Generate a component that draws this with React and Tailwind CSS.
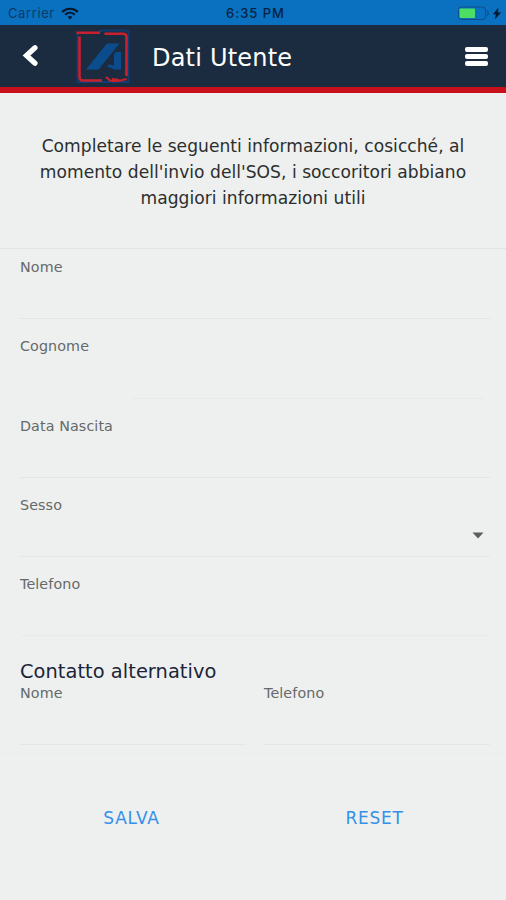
import clsx from "clsx";

function StatusBar() {
  return (
    <div className="h-[25px] bg-[#0a70c0] flex items-center justify-between pl-2 pr-1 font-['Inter','Liberation_Sans',sans-serif] text-[13px] leading-none">
      <div className="flex items-center gap-[6px] flex-1 pt-[2px]">
        <span className="text-[#0b3c69] tracking-[0.6px]">Carrier</span>
        <svg width="18" height="13" viewBox="0 0 18 13" fill="none" className="-mt-px">
          <path d="M1.2 4.9C5.6 0.7 12.4 0.7 16.8 4.9" stroke="#06182c" strokeWidth="2.2" />
          <path d="M4.2 7.8C7 5.2 11 5.2 13.8 7.8" stroke="#06182c" strokeWidth="2" />
          <path d="M6.6 10L9 12.5L11.4 10C10 8.8 8 8.8 6.6 10Z" fill="#06182c" />
        </svg>
      </div>
      <span className="text-[#06233f] font-medium tracking-[1px] pt-[2px] pl-px">
        6:35 PM
      </span>
      <div className="flex-1 flex justify-end">
        <svg width="44" height="15" viewBox="0 0 44 15" fill="none" className="mt-px">
          <rect x="0.5" y="1" width="27" height="12.5" rx="3" stroke="#0c4f8c" />
          <rect x="1.5" y="2.5" width="15.5" height="9.5" rx="1" fill="#4cdf64" />
          <path d="M28.8 4.5C30.8 5.5 30.8 9 28.8 10" stroke="#0c4f8c" strokeWidth="1.2" />
          <path d="M40 2.5L35.5 8H38.2L37.4 12.5L42.5 6.8H39.4Z" fill="#06182c" stroke="#06182c" strokeWidth="0.6" />
        </svg>
      </div>
    </div>
  );
}

function Logo() {
  return (
    <svg width="54" height="56" viewBox="0 0 54 56" fill="none">
      <path d="M1.5 6V54H52.5V5Q52.5 2.5 49 2.5H27L24 3L22 6" stroke="#103c70" strokeWidth="2" />
      <path
        d="M0.5 4.8H24M3.5 8.5V49Q3.5 52.5 7 52.5H26M28.5 5.7H47Q50.5 5.7 50.5 9V48"
        stroke="#c9202f"
        strokeWidth="2.6"
      />
      <path
        d="M30 49L34 52.5Q42 54 50.5 51M36 51L43 52"
        stroke="#c9202f"
        strokeWidth="2.2"
      />
      <path d="M10 41.5L30.5 16Q31 15.5 32 15.5H43.5L22.5 41.5Z" fill="#0b4c8c" />
      <path d="M38 26L40 24H45V41.5H39L31 38.5L33 36.5L38 37.5Z" fill="#0b4c8c" />
    </svg>
  );
}

function Header() {
  return (
    <header className="h-[68px] bg-[#1c2c40] border-b-[6px] border-[#c80f1c] flex items-center">
      <button aria-label="Indietro" className="ml-[22px] mr-[37px] -mt-[2px]">
        <svg width="17" height="23" viewBox="0 0 17 23" fill="none">
          <path
            d="M13 3.8L4.5 11.5L13 19.2"
            stroke="#fff"
            strokeWidth="5.2"
            strokeLinecap="round"
          />
        </svg>
      </button>
      <Logo />
      <h1 className="ml-[22px] mt-[3px] text-[24px] leading-none tracking-[0.2px] text-white flex-1">
        Dati Utente
      </h1>
      <button aria-label="Menu" className="mr-[18px] mt-px flex flex-col gap-[2px]">
        <span className="block w-[23px] h-[5px] rounded-[2px] bg-white" />
        <span className="block w-[23px] h-[5px] rounded-[2px] bg-white" />
        <span className="block w-[23px] h-[5px] rounded-[2px] bg-white" />
      </button>
    </header>
  );
}

function Field({ label, select = false, className, lineClassName = "border-[#e3e6e6]" }) {
  return (
    <div className={clsx("flex flex-col", className)}>
      <label className="text-[14.3px] leading-[18px] tracking-[0.1px] text-[#666969]">
        {label}
      </label>
      <div
        className={clsx("flex-1 border-b flex items-start justify-end", lineClassName)}
      >
        {select && (
          <svg width="12" height="7" viewBox="0 0 12 7" className="mt-[18px] mr-[6px]">
            <path d="M0.5 0.5H11.5L6 6.5Z" fill="#5c5f5f" />
          </svg>
        )}
      </div>
    </div>
  );
}

export default function App() {
  return (
    <div className="w-[506px] h-[900px] bg-[#edf0ef] overflow-hidden font-['DejaVu_Sans',sans-serif]">
      <StatusBar />
      <Header />

      <p className="h-[156px] pt-[40px] border-b border-[#e2e5e5] text-center text-[17.1px] leading-[26px] tracking-[0.03px] text-[#2c2e2e]">
        Completare le seguenti informazioni, cosicché, al
        <br />
        momento dell'invio dell'SOS, i soccoritori abbiano
        <br />
        maggiori informazioni utili
      </p>

      <main className="pl-5 pr-4 pt-[9px]">
        <Field label="Nome" className="h-[61px]" />
        <div className="h-[80px] pt-[18px] flex flex-col">
          <label className="text-[14.3px] leading-[18px] tracking-[0.1px] text-[#666969]">
            Cognome
          </label>
          <div className="flex-1 ml-[112px] mr-[6px] border-b border-[#e7eaea]" />
        </div>
        <Field label="Data Nascita" className="mt-[18px] h-[61px]" />
        <Field label="Sesso" select className="mt-[18px] h-[61px]" />
        <Field
          label="Telefono"
          className="mt-[18px] h-[61px]"
          lineClassName="border-[#e8ebea]"
        />

        <h2 className="mt-[24px] text-[19.4px] leading-6 tracking-[0.05px] text-[#1c2438]">
          Contatto alternativo
        </h2>
        <div className="grid grid-cols-[226px_1fr] gap-[18px]">
          <Field label="Nome" className="h-[61px]" />
          <Field label="Telefono" className="h-[61px]" />
        </div>
      </main>

      <div className="mt-[8px] border-t-2 border-[#ebeeed] pt-[51px] flex text-[17px] leading-6 text-[#3590e9]">
        <button className="w-[263px] text-center tracking-[0.8px]">SALVA</button>
        <button className="w-[223px] text-center tracking-[0.7px]">RESET</button>
      </div>
    </div>
  );
}
